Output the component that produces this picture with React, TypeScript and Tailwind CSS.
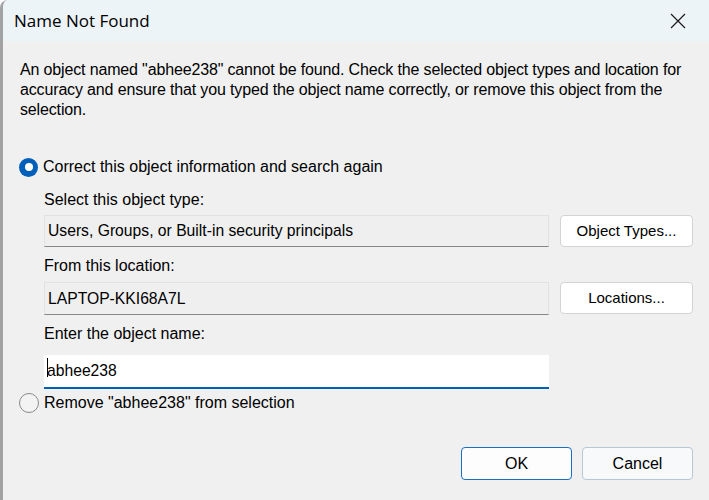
export default function App() {
  return (
    <div className="w-[709px] h-[500px] overflow-hidden flex flex-col bg-[#f0f0f0] border-l-[3px] border-l-[#a2a2a2] rounded-tl-[8px] text-black font-['Liberation_Sans',Arial,sans-serif]">
      {/* title bar */}
      <div className="h-[41px] shrink-0 flex items-center justify-between pl-[11px] pr-[23px] bg-[#edf4f8]">
        <span className="text-[17px] font-['Open_Sans','Liberation_Sans',sans-serif]">Name Not Found</span>
        <svg width="16" height="16" viewBox="0 0 16 16" className="text-[#1a1a1a]">
          <path d="M1 1 L15 15 M15 1 L1 15" stroke="currentColor" strokeWidth="1.2" fill="none" />
        </svg>
      </div>

      <div className="flex flex-col pl-[16px] pr-[16px]">
        <p className="mt-[19px] ml-[1px] text-[16px] leading-[20px] tracking-[-0.15px]">
          An object named "abhee238" cannot be found. Check the selected object types and location for accuracy and ensure that you typed the object name correctly, or remove this object from the selection.
        </p>

        <label className="mt-[37px] h-[20px] flex items-center gap-[5px] text-[16px]">
          <span className="w-[19px] h-[19px] rounded-full bg-[#005fb8] flex items-center justify-center">
            <span className="w-[8px] h-[8px] rounded-full bg-white" />
          </span>
          Correct this object information and search again
        </label>

        <div className="ml-[25px] flex flex-col text-[16px]">
          <div className="mt-[13px] h-[20px] leading-[20px]">Select this object type:</div>
          <div className="mt-[5px] flex gap-[11px]">
            <div className="w-[505px] h-[32px] flex items-center pl-[3px] border border-[#e2e2e2] border-b-[#878787] bg-[#efefef] text-[15.7px]">
              Users, Groups, or Built-in security principals
            </div>
            <button className="w-[133px] h-[32px] rounded-[4px] border border-[#d3d3d3] bg-white text-[15px]">Object Types...</button>
          </div>

          <div className="mt-[9px] h-[20px] leading-[20px]">From this location:</div>
          <div className="mt-[6px] flex gap-[11px]">
            <div className="w-[505px] h-[33px] flex items-center pl-[3px] border border-[#e2e2e2] border-b-[#878787] bg-[#efefef] text-[15.7px]">
              LAPTOP-KKI68A7L
            </div>
            <button className="w-[133px] h-[32px] rounded-[4px] border border-[#d3d3d3] bg-white text-[15px]">Locations...</button>
          </div>

          <div className="mt-[9px] h-[20px] leading-[20px]">Enter the object name:</div>
          <div className="mt-[11px] w-[505px] h-[34px] flex items-center pl-[3px] bg-white border-b-2 border-b-[#005fb8] text-[15.7px]">
            <span className="relative">
              <span className="absolute left-0 top-[-1px] w-[1px] h-[19px] bg-black" />
              abhee238
            </span>
          </div>
        </div>

        <label className="mt-[4px] h-[20px] flex items-center gap-[5px] text-[16px]">
          <span className="w-[20px] h-[20px] rounded-full border border-[#8a8a8a] bg-[#f3f3f3]" />
          Remove "abhee238" from selection
        </label>

        <div className="mt-[34px] flex justify-end gap-[10px]">
          <button className="w-[111px] h-[33px] rounded-[4px] border border-[#1a6fc2] bg-[#fdfdfd] text-[16px]">OK</button>
          <button className="w-[111px] h-[33px] rounded-[4px] border border-[#b8c7d6] bg-[#f7f9fb] text-[16px]">Cancel</button>
        </div>
      </div>
    </div>
  )
}
